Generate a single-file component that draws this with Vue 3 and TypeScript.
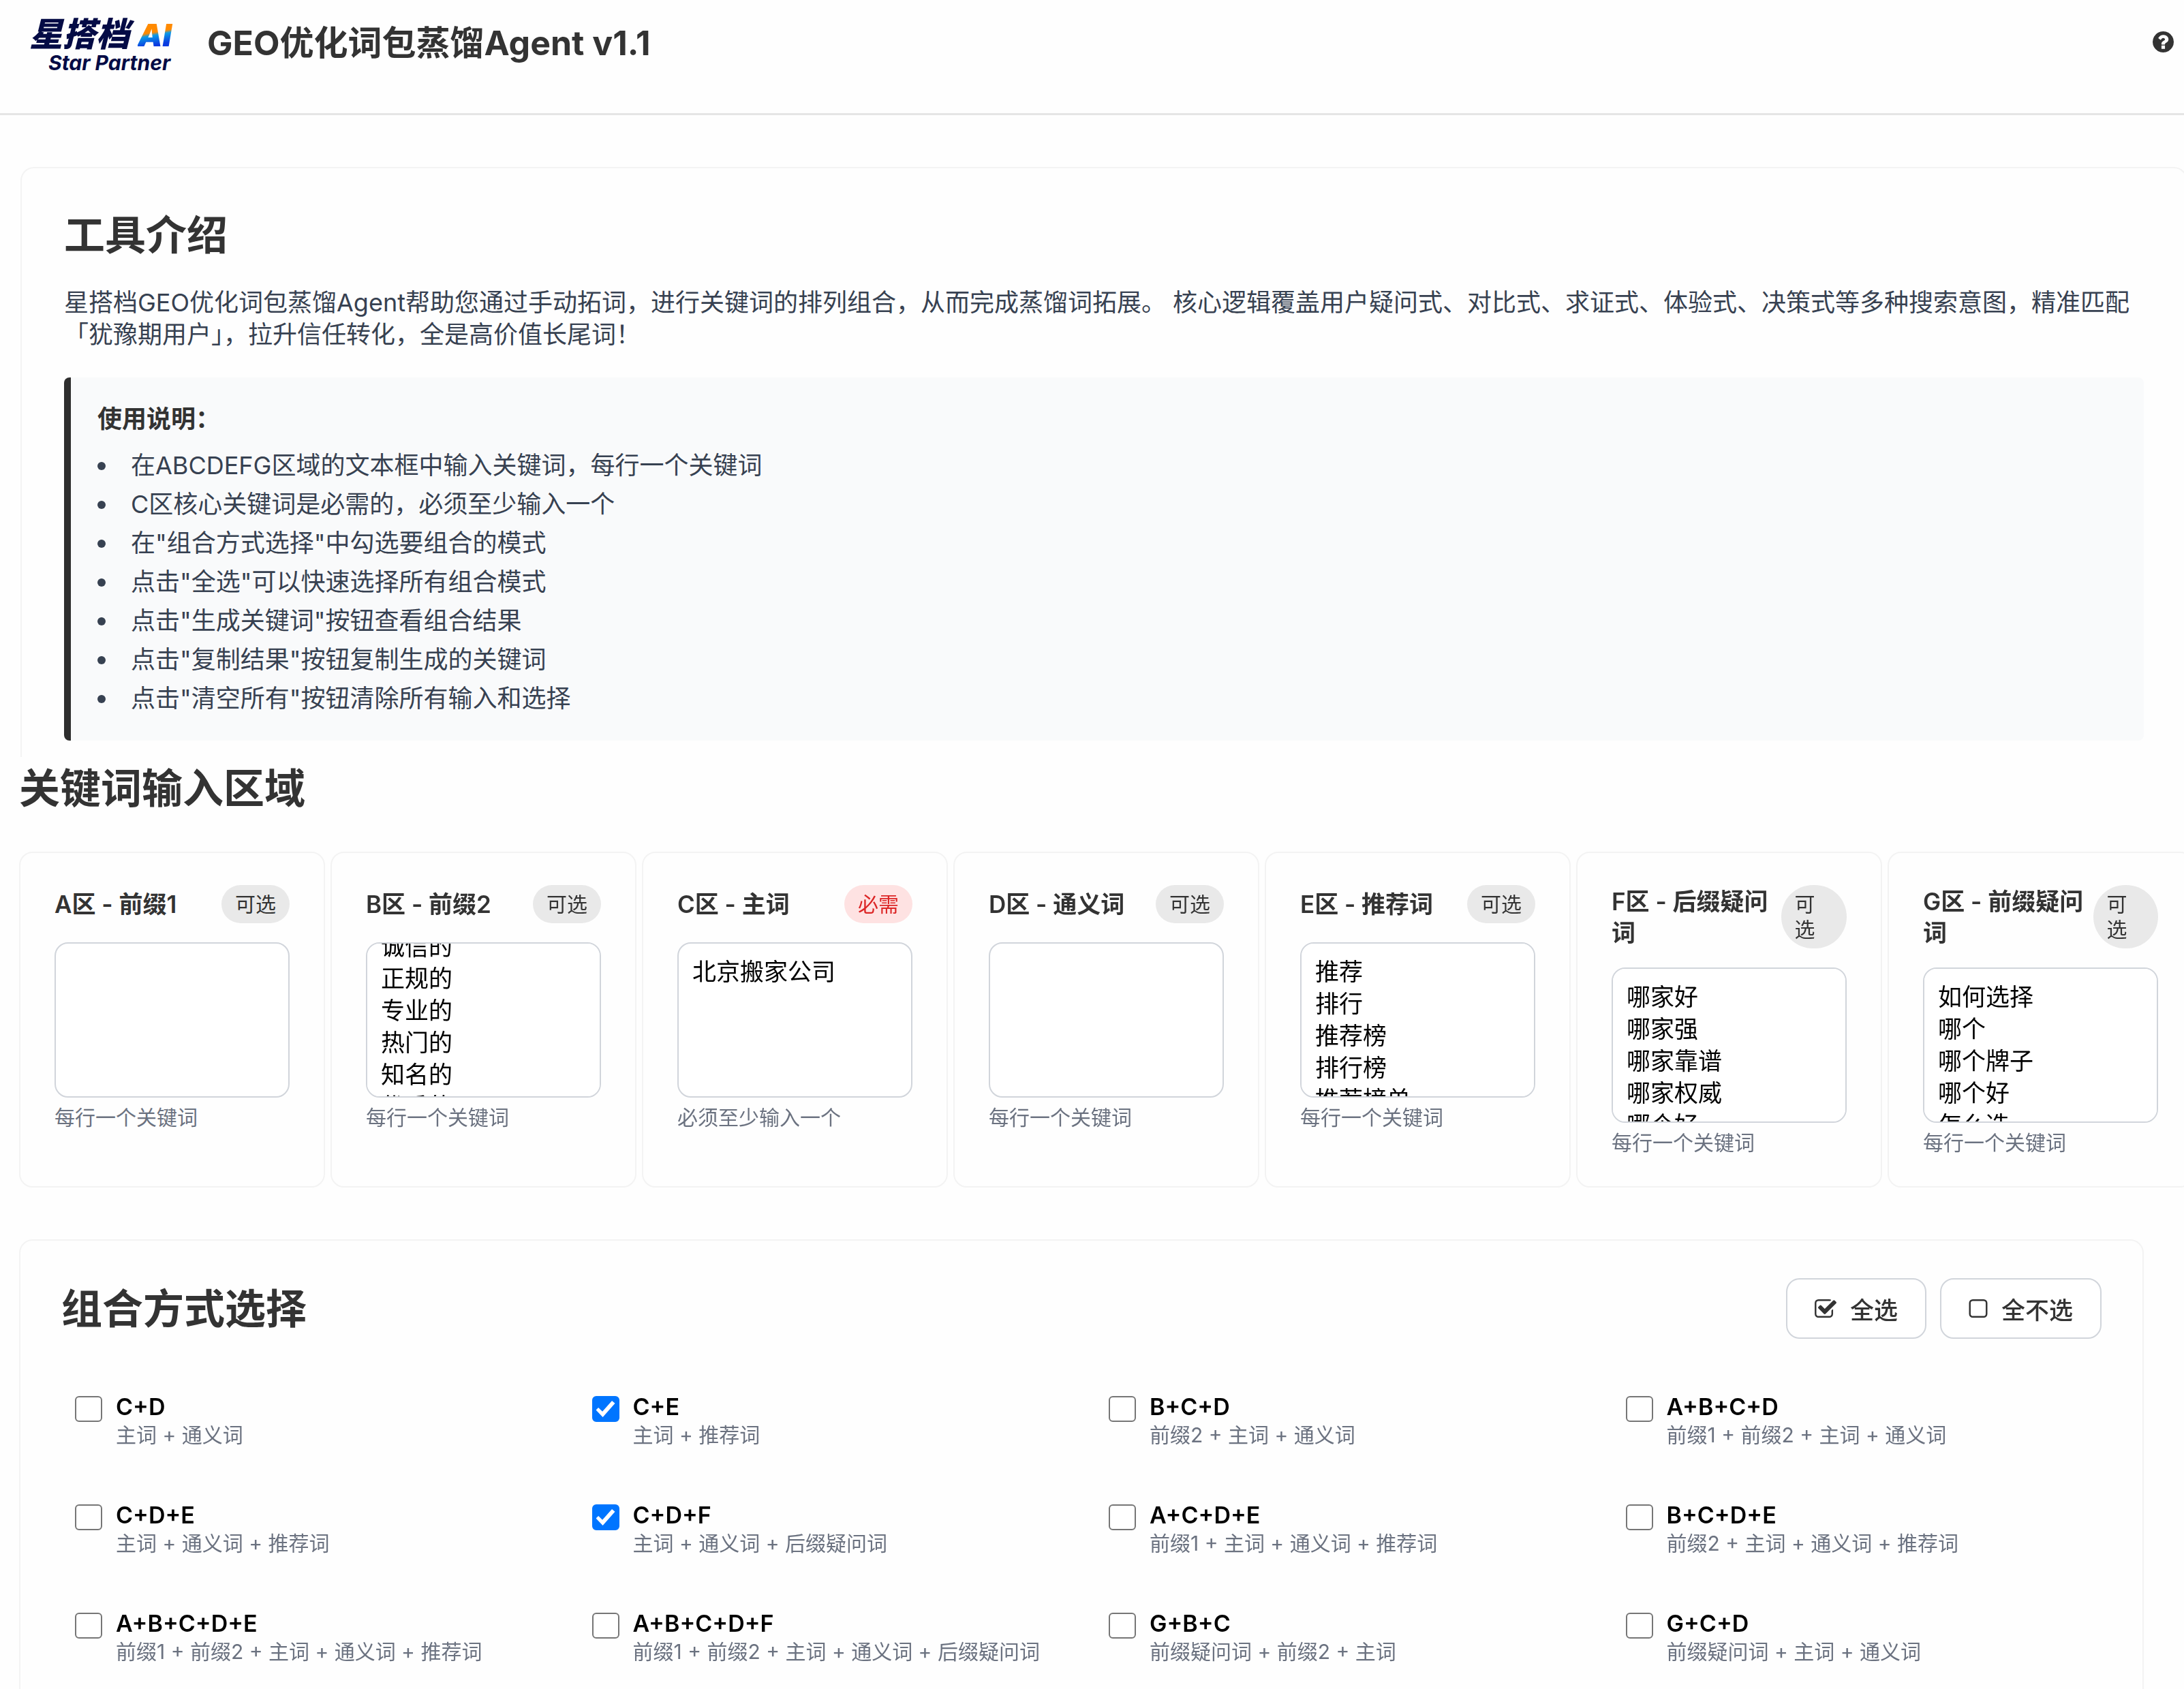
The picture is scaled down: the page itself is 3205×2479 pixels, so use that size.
<script setup lang="ts">
import { onMounted, reactive, ref } from 'vue'

interface Zone {
  id: string
  title: string
  required: boolean
  hint: string
  text: string
  scroll: number
}

interface Combo {
  code: string
  desc: string
  checked: boolean
}

const steps: string[] = [
  '在ABCDEFG区域的文本框中输入关键词，每行一个关键词',
  'C区核心关键词是必需的，必须至少输入一个',
  '在"组合方式选择"中勾选要组合的模式',
  '点击"全选"可以快速选择所有组合模式',
  '点击"生成关键词"按钮查看组合结果',
  '点击"复制结果"按钮复制生成的关键词',
  '点击"清空所有"按钮清除所有输入和选择',
]

const zones = reactive<Zone[]>([
  { id: 'a', title: 'A区 - 前缀1', required: false, hint: '每行一个关键词', text: '', scroll: 0 },
  { id: 'b', title: 'B区 - 前缀2', required: false, hint: '每行一个关键词', text: '靠谱的\n诚信的\n正规的\n专业的\n热门的\n知名的\n优秀的\n', scroll: 84 },
  { id: 'c', title: 'C区 - 主词', required: true, hint: '必须至少输入一个', text: '北京搬家公司', scroll: 0 },
  { id: 'd', title: 'D区 - 通义词', required: false, hint: '每行一个关键词', text: '', scroll: 0 },
  { id: 'e', title: 'E区 - 推荐词', required: false, hint: '每行一个关键词', text: '推荐\n排行\n推荐榜\n排行榜\n推荐榜单', scroll: 0 },
  { id: 'f', title: 'F区 - 后缀疑问词', required: false, hint: '每行一个关键词', text: '哪家好\n哪家强\n哪家靠谱\n哪家权威\n哪个好', scroll: 0 },
  { id: 'g', title: 'G区 - 前缀疑问词', required: false, hint: '每行一个关键词', text: '如何选择\n哪个\n哪个牌子\n哪个好\n怎么选', scroll: 0 },
])

const combos = reactive<Combo[]>([
  { code: 'C+D', desc: '主词 + 通义词', checked: false },
  { code: 'C+E', desc: '主词 + 推荐词', checked: true },
  { code: 'B+C+D', desc: '前缀2 + 主词 + 通义词', checked: false },
  { code: 'A+B+C+D', desc: '前缀1 + 前缀2 + 主词 + 通义词', checked: false },
  { code: 'C+D+E', desc: '主词 + 通义词 + 推荐词', checked: false },
  { code: 'C+D+F', desc: '主词 + 通义词 + 后缀疑问词', checked: true },
  { code: 'A+C+D+E', desc: '前缀1 + 主词 + 通义词 + 推荐词', checked: false },
  { code: 'B+C+D+E', desc: '前缀2 + 主词 + 通义词 + 推荐词', checked: false },
  { code: 'A+B+C+D+E', desc: '前缀1 + 前缀2 + 主词 + 通义词 + 推荐词', checked: false },
  { code: 'A+B+C+D+F', desc: '前缀1 + 前缀2 + 主词 + 通义词 + 后缀疑问词', checked: false },
  { code: 'G+B+C', desc: '前缀疑问词 + 前缀2 + 主词', checked: false },
  { code: 'G+C+D', desc: '前缀疑问词 + 主词 + 通义词', checked: false },
])

const areas = ref<HTMLTextAreaElement[]>([])

onMounted(() => {
  areas.value.forEach((el) => {
    const zone = zones.find((z) => z.id === el.id)
    if (zone) el.scrollTop = zone.scroll
  })
})

function setAll(value: boolean): void {
  combos.forEach((c) => (c.checked = value))
}
</script>

<template>
  <div class="page">
    <header class="topbar">
      <div class="logo">
        <div class="logo-main"><span>星搭档</span><span class="logo-ai">AI</span></div>
        <div class="logo-sub">Star Partner</div>
      </div>
      <h1>GEO优化词包蒸馏Agent v1.1</h1>
      <button class="help" type="button" aria-label="帮助">
        <svg viewBox="0 128 1536 1536" aria-hidden="true"><path d="M896 1376v-192q0-14-9-23t-23-9h-192q-14 0-23 9t-9 23v192q0 14 9 23t23 9h192q14 0 23-9t9-23zm256-672q0-88-55.5-163t-138.5-116-170-41q-243 0-371 213-15 24 8 42l132 100q7 6 19 6 16 0 25-12 53-68 86-92 34-24 86-24 48 0 85.5 26t37.5 59q0 38-20 61t-68 45q-63 28-115.5 86.5t-52.5 125.5v36q0 14 9 23t23 9h192q14 0 23-9t9-23q0-19 21.5-49.5t54.5-49.5q32-18 49-28.5t46-35 44.5-48 28-60.5 12.5-81zm384 192q0 209-103 385.5t-279.5 279.5-385.5 103-385.5-103-279.5-279.5-103-385.5 103-385.5 279.5-279.5 385.5-103 385.5 103 279.5 279.5 103 385.5z" /></svg>
      </button>
    </header>

    <section class="intro">
      <h2>工具介绍</h2>
      <p>星搭档GEO优化词包蒸馏Agent帮助您通过手动拓词，进行关键词的排列组合，从而完成蒸馏词拓展。 核心逻辑覆盖用户疑问式、对比式、求证式、体验式、决策式等多种搜索意图，精准匹配「犹豫期用户」，拉升信任转化，全是高价值长尾词！</p>
      <div class="guide">
        <h3>使用说明：</h3>
        <ul>
          <li v-for="s in steps" :key="s">{{ s }}</li>
        </ul>
      </div>
    </section>

    <section class="inputs">
      <h2>关键词输入区域</h2>
      <div class="zones">
        <div v-for="z in zones" :key="z.id" class="zone">
          <div class="zone-head">
            <label :for="z.id">{{ z.title }}</label>
            <span class="pill" :class="{ required: z.required }">{{ z.required ? '必需' : '可选' }}</span>
          </div>
          <textarea :id="z.id" ref="areas" v-model="z.text" spellcheck="false"></textarea>
          <p class="hint">{{ z.hint }}</p>
        </div>
      </div>
    </section>

    <section class="combos">
      <div class="combos-head">
        <h2>组合方式选择</h2>
        <div class="actions">
          <button type="button" @click="setAll(true)">
            <svg class="ico-check" viewBox="64 128 1664 1408" aria-hidden="true"><path d="M1472 930v318q0 119-84.5 203.5t-203.5 84.5h-832q-119 0-203.5-84.5t-84.5-203.5v-832q0-119 84.5-203.5t203.5-84.5h832q63 0 117 25 15 7 18 23 3 17-9 29l-49 49q-10 10-23 10-3 0-9-2-23-6-45-6h-832q-66 0-113 47t-47 113v832q0 66 47 113t113 47h832q66 0 113-47t47-113v-254q0-13 9-22l64-64q10-10 23-10 6 0 12 3 20 8 20 29zm231-489l-814 814q-24 24-57 24t-57-24l-430-430q-24-24-24-57t24-57l110-110q24-24 57-24t57 24l263 263 647-647q24-24 57-24t57 24l110 110q24 24 24 57t-24 57z" /></svg>
            全选
          </button>
          <button type="button" @click="setAll(false)">
            <svg class="ico-box" viewBox="192 128 1408 1408" aria-hidden="true"><path d="M1312 256h-832q-66 0-113 47t-47 113v832q0 66 47 113t113 47h832q66 0 113-47t47-113v-832q0-66-47-113t-113-47zm288 160v832q0 119-84.5 203.5t-203.5 84.5h-832q-119 0-203.5-84.5t-84.5-203.5v-832q0-119 84.5-203.5t203.5-84.5h832q119 0 203.5 84.5t84.5 203.5z" /></svg>
            全不选
          </button>
        </div>
      </div>
      <div class="combo-grid">
        <label v-for="c in combos" :key="c.code" class="combo">
          <input v-model="c.checked" type="checkbox" />
          <span class="combo-text">
            <span class="code">{{ c.code }}</span>
            <span class="desc">{{ c.desc }}</span>
          </span>
        </label>
      </div>
    </section>
  </div>
</template>

<style>
body {
  background: #fefefe;
}
</style>

<style scoped>
.page {
  height: 100vh;
  overflow: hidden;
  color: #333;
  font-family: Inter, 'Noto Sans CJK SC', sans-serif;
  font-size: 36px;
  line-height: 47px;
}
.page * {
  box-sizing: border-box;
}
h1,
h2,
h3,
p,
ul {
  margin: 0;
  padding: 0;
}
h2 {
  font-size: 60px;
  font-weight: 600;
  line-height: 80px;
}
button,
textarea {
  font-family: inherit;
}

.topbar {
  display: flex;
  align-items: flex-start;
  height: 169px;
  padding: 28px 15px 0 43px;
  border-bottom: 3px solid #e5e5e5;
}
.logo {
  width: 261px;
  color: #040b45;
  font-style: italic;
}
.logo-main {
  display: flex;
  align-items: center;
  gap: 12px;
  font-size: 49px;
  font-weight: 900;
  line-height: 46px;
}
.logo-ai {
  padding-right: 8px;
  font-size: 46px;
  background: linear-gradient(170deg, #ff8a00 42%, #0a9be8 50%, #0a3be0 75%);
  background-clip: text;
  color: transparent;
}
.logo-sub {
  padding-left: 28px;
  font-size: 30px;
  font-weight: 700;
  line-height: 36px;
}
h1 {
  flex: 1;
  font-size: 50px;
  font-weight: 700;
  line-height: 70px;
}
.help {
  display: flex;
  height: 66px;
  align-items: center;
  padding: 0;
  border: 0;
  background: none;
}
.help svg {
  width: 31px;
  height: 31px;
  fill: #333;
}

.intro {
  height: 866px;
  margin: 76px -5px 0 30px;
  padding: 58px 62px 0;
  border: 2px solid #f3f3f3;
  border-bottom: 0;
  border-radius: 20px 20px 0 0;
}
.intro h2 {
  margin-bottom: 36px;
}
.intro p {
  color: #374151;
}
.guide {
  margin-top: 39px;
  padding: 38px 39px;
  border-left: 10px solid #2e2e2e;
  border-radius: 8px;
  background: #f9fafb;
}
.guide h3 {
  font-size: 36px;
  font-weight: 600;
  margin-bottom: 21px;
}
.guide ul {
  list-style: none;
  color: #374151;
}
.guide li {
  display: flex;
  align-items: center;
  gap: 37px;
}
.guide li + li {
  margin-top: 10px;
}
.guide li::before {
  content: '';
  width: 12px;
  height: 12px;
  border-radius: 50%;
  background: #374151;
}

.inputs {
  margin: 6px -14px 0 28px;
}
.zones {
  display: grid;
  grid-template-columns: repeat(7, 1fr);
  gap: 8px;
  margin-top: 53px;
}
.zone {
  padding: 47px 50px 45px;
  border: 2px solid #f3f3f3;
  border-radius: 20px;
}
.zone-head {
  display: flex;
  align-items: center;
  justify-content: space-between;
}
.zone-head label {
  font-size: 35px;
  font-weight: 600;
  line-height: 46px;
}
.pill {
  padding: 10px 20px 9px;
  border-radius: 50px;
  background: #e9e9e9;
  font-size: 30px;
  line-height: 37px;
}
.pill.required {
  background: #fee2e2;
  color: #dc2626;
}
textarea {
  display: block;
  width: 100%;
  height: 228px;
  margin-top: 28px;
  padding: 18px 20px;
  border: 2px solid #d1d5db;
  border-radius: 20px;
  outline: 0;
  resize: none;
  background: #fff;
  color: #000;
  font-size: 35px;
  line-height: 47px;
  scrollbar-width: none;
}
.hint {
  margin-top: 11px;
  color: #6b7280;
  font-size: 30px;
  line-height: 37px;
}

.combos {
  margin: 76px 59px 0 28px;
  padding: 55px 60px;
  border: 2px solid #f3f3f3;
  border-radius: 20px;
}
.combos-head {
  display: flex;
  align-items: center;
  justify-content: space-between;
}
.actions {
  display: flex;
  gap: 20px;
}
.actions button {
  display: flex;
  align-items: center;
  gap: 20px;
  height: 89px;
  padding: 0 40px;
  border: 2px solid #d1d5db;
  border-radius: 20px;
  background: #fff;
  color: #333;
  font-size: 35px;
  font-weight: 500;
}
.actions svg {
  height: 27px;
  fill: #333;
}
.ico-check {
  width: 32px;
}
.ico-box {
  width: 28px;
}
.combo-grid {
  display: grid;
  grid-template-columns: repeat(4, 1fr);
  gap: 37px 40px;
  margin-top: 57px;
}
.combo {
  display: flex;
  align-items: flex-start;
  gap: 20px;
  padding: 19px 20px;
}
.combo input {
  display: grid;
  place-items: center;
  flex: none;
  width: 40px;
  height: 38px;
  margin: 8px 0 0;
  appearance: none;
  border: 2px solid #767676;
  border-radius: 6px;
  background: #fff;
}
.combo input:checked {
  border-color: #0075ff;
  background: #0075ff;
}
.combo input:checked::before {
  content: '';
  width: 28px;
  height: 26px;
  background: #fff;
  clip-path: polygon(0 56%, 13% 42%, 34% 64%, 84% 4%, 100% 18%, 36% 96%);
}
.combo-text {
  display: flex;
  flex-direction: column;
}
.code {
  color: #000;
  font-size: 34px;
  font-weight: 600;
  line-height: 47px;
}
.desc {
  color: #6b7280;
  font-size: 30px;
  line-height: 37px;
}
</style>
